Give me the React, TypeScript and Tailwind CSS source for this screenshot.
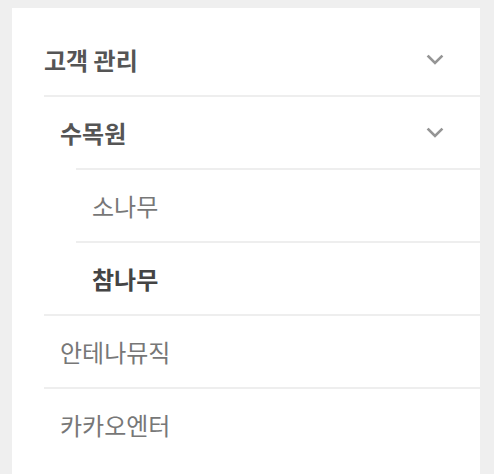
import React from 'react';

const font = { fontFamily: '"Noto Sans CJK KR", "Noto Sans", sans-serif' };

const Chevron = () => (
  <svg width="24" height="24" viewBox="0 0 24 24" fill="none" stroke="#959595" strokeWidth="2.6" strokeLinecap="square">
    <path d="M5.5 8.5 L12 15 L18.5 8.5" />
  </svg>
);

export default function App() {
  return (
    <div className="min-h-[474px] bg-[#efefef] pt-2 pl-3 pr-[14px]" style={font}>
      <div className="min-h-[466px] bg-white pt-4 pl-8">
        {/* top level */}
        <div className="flex h-[71px] items-center justify-between pr-[33px]">
          <span className="text-[24px] font-bold text-[#555]">고객 관리</span>
          <Chevron />
        </div>

        <div className="flex h-[73px] items-center justify-between border-t-2 border-[#eeeeee] pl-4 pr-[33px]">
          <span className="text-[24px] font-bold text-[#555]">수목원</span>
          <Chevron />
        </div>

        {/* 수목원 children */}
        <div className="ml-8">
          <div className="flex h-[73px] items-center border-t-2 border-[#eeeeee] pl-4">
            <span className="text-[24px] text-[#777]">소나무</span>
          </div>
          <div className="flex h-[73px] items-center border-t-2 border-[#eeeeee] pl-4">
            <span className="text-[24px] font-bold text-[#444]">참나무</span>
          </div>
        </div>

        <div className="flex h-[73px] items-center border-t-2 border-[#eeeeee] pl-4">
          <span className="text-[24px] text-[#777]">안테나뮤직</span>
        </div>
        <div className="flex h-[73px] items-center border-t-2 border-[#eeeeee] pl-4">
          <span className="text-[24px] text-[#777]">카카오엔터</span>
        </div>
      </div>
    </div>
  );
}
